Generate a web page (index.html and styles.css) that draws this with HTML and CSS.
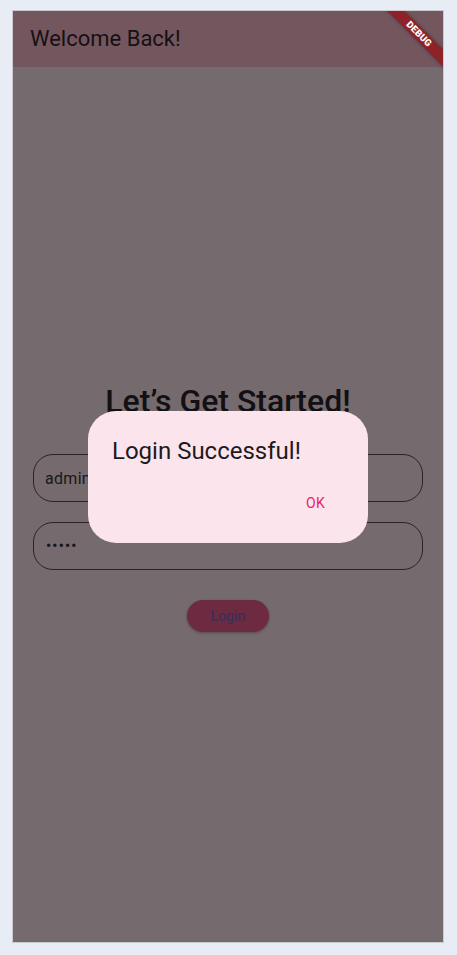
FILE: index.html
```html
<!DOCTYPE html>
<html lang="en">
<head>
<meta charset="utf-8">
<title>Welcome Back!</title>
<link rel="stylesheet" href="styles.css">
</head>
<body>
  <div class="frame">
    <header class="appbar">
      <h1 class="appbar-title">Welcome Back!</h1>
    </header>
    <main class="content">
      <h2 class="heading">Let’s Get Started!</h2>
      <div class="field"><span class="field-text">admin</span></div>
      <div class="field field-password"><span class="field-text dots">•••••</span></div>
      <button class="login-btn">Login</button>
    </main>
    <div class="barrier">
      <div class="dialog">
        <div class="dialog-title">Login Successful!</div>
        <div class="dialog-actions"><span class="ok-btn">OK</span></div>
      </div>
    </div>
    <div class="debug-banner"><span>DEBUG</span></div>
  </div>
</body>
</html>
```

FILE: styles.css
```css
* { box-sizing: border-box; }

html, body {
  margin: 0;
  padding: 0;
}

body {
  background: #e8edf5;
  padding: 10px 12px;
  font-family: Roboto, "Noto Sans", "Liberation Sans", sans-serif;
}

.frame {
  position: relative;
  width: 432px;
  height: 933px;
  border: 1px solid #cbcbcf;
  background: #756a6d;
  overflow: hidden;
  display: flex;
  flex-direction: column;
}

.appbar {
  height: 56px;
  flex: none;
  background: #74565f;
  display: flex;
  align-items: center;
  padding-left: 17px;
}

.appbar-title {
  margin: 0;
  font-weight: 400;
  font-size: 22px;
  line-height: 28px;
  color: #151113;
}

.content {
  flex: 1;
  display: flex;
  flex-direction: column;
  align-items: center;
  padding: 315px 20px 0;
}

.heading {
  margin: 0;
  font-size: 32px;
  line-height: 38px;
  font-weight: 500;
  color: #121012;
}

.field {
  align-self: stretch;
  height: 48px;
  border: 1px solid #2a2224;
  border-radius: 20px;
  display: flex;
  align-items: center;
  padding-left: 11px;
  margin-top: 34px;
}

.field-password {
  margin-top: 20px;
}

.field-text {
  font-size: 16px;
  color: #1b1618;
  letter-spacing: 0.3px;
}

.dots {
  font-size: 14px;
  font-weight: 700;
  letter-spacing: 1.3px;
  padding-left: 1px;
}

.login-btn {
  margin-top: 30px;
  height: 32px;
  width: 82px;
  border: none;
  border-radius: 16px;
  background: #6e2a40;
  color: #3c2f5a;
  font-family: inherit;
  font-size: 14px;
  font-weight: 500;
  padding: 0;
  box-shadow: 0 1px 3px rgba(0, 0, 0, 0.3);
}

.barrier {
  position: absolute;
  inset: 0;
  display: flex;
  align-items: center;
  justify-content: center;
}

.dialog {
  width: 280px;
  height: 132px;
  background: #fbe4ec;
  border-radius: 28px;
  padding: 24px 0 0 24px;
  display: flex;
  flex-direction: column;
}

.dialog-title {
  font-size: 24px;
  line-height: 32px;
  color: #1e1a1c;
}

.dialog-actions {
  display: flex;
  justify-content: flex-end;
  padding-right: 43px;
  margin-top: 26px;
}

.ok-btn {
  font-size: 14px;
  line-height: 20px;
  font-weight: 400;
  color: #e8236b;
  letter-spacing: 0.3px;
}

.debug-banner {
  position: absolute;
  top: 17px;
  left: 346px;
  width: 120px;
  height: 12px;
  background: #8f2228;
  transform: rotate(45deg);
  display: flex;
  align-items: center;
  justify-content: center;
  box-shadow: 0 0 4px rgba(0, 0, 0, 0.35);
}

.debug-banner span {
  color: #ffffff;
  font-size: 9.5px;
  line-height: 10px;
  font-weight: 900;
  letter-spacing: 0.2px;
}
```
